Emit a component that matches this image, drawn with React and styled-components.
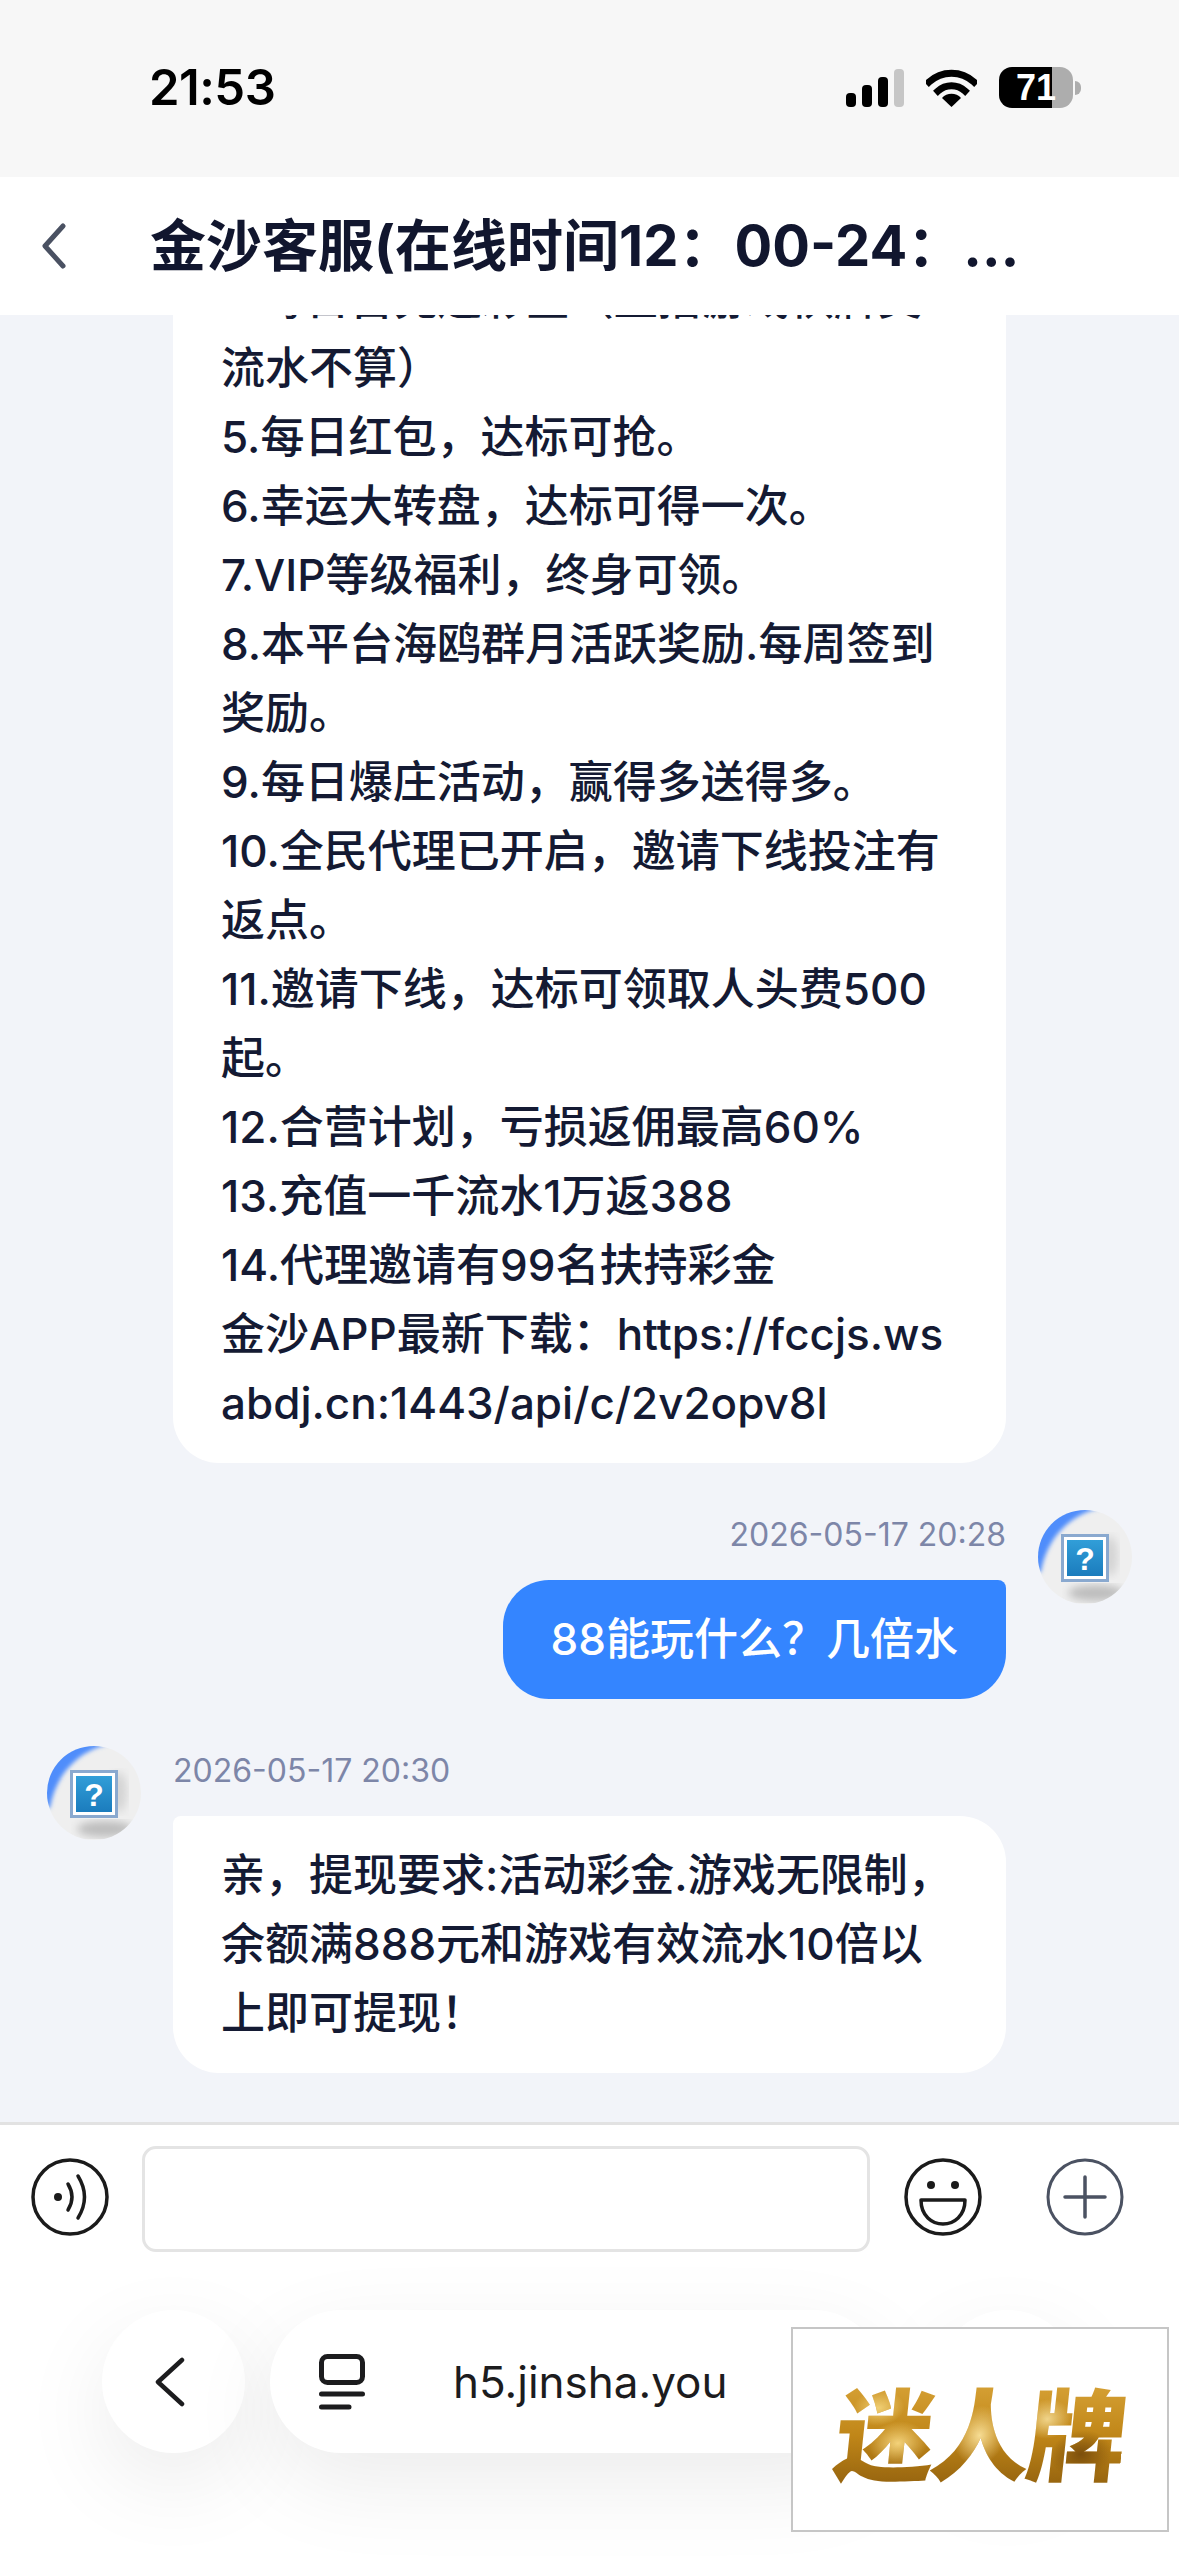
import React from 'react';
import styled, { createGlobalStyle } from 'styled-components';

const GlobalStyle = createGlobalStyle`
  html, body { margin: 0; padding: 0; background: #fff; }
  * { box-sizing: border-box; }
  body { font-family: Inter, "Noto Sans CJK SC", sans-serif; }
`;

const Page = styled.div`
  position: relative;
  width: 1179px;
  height: 2556px;
  display: flex;
  flex-direction: column;
  overflow: hidden;
  background: #fff;
`;

// status bar
const StatusBar = styled.div`
  height: 177px;
  flex: none;
  background: #f7f7f7;
  display: flex;
  justify-content: space-between;
  align-items: flex-start;
  padding: 67px 98px 0 149px;
`;
const Clock = styled.div`
  font: 600 49px/42px Inter, sans-serif;
  color: #000;
  letter-spacing: -0.5px;
`;
const StatusIcons = styled.div`
  display: flex;
  align-items: center;
  gap: 22px;
`;
const Battery = styled.div`
  width: 74px;
  height: 41px;
  border-radius: 13px;
  overflow: hidden;
  display: flex;
  align-items: center;
  justify-content: center;
  font: 700 36px/41px "Liberation Sans", sans-serif;
  color: #fff;
  background: linear-gradient(90deg, #000 0 53px, #adadad 53px);
`;
const BatteryWrap = styled.div`
  display: flex;
  align-items: center;
  gap: 2px;
`;
const BatteryTip = styled.div`
  width: 6px;
  height: 14px;
  background: #adadad;
  border-radius: 0 7px 7px 0;
`;

// header
const Header = styled.div`
  height: 138px;
  flex: none;
  background: #fff;
  display: flex;
  align-items: center;
  padding: 0 0 0 41px;
  position: relative;
  z-index: 2;
`;
const Title = styled.div`
  margin-left: 84px;
  width: 875px;
  font: 700 56px/76px Inter, "Noto Sans CJK SC", sans-serif;
  color: #11162e;
  white-space: nowrap;
  overflow: hidden;
  text-overflow: ellipsis;
`;

// chat list
const ChatList = styled.div`
  flex: 1;
  min-height: 0;
  overflow: hidden;
  background: #f2f4f9;
  display: flex;
  flex-direction: column;
  justify-content: flex-end;
  gap: 47px;
  padding: 0 47px 49px;
`;
const Row = styled.div`
  display: flex;
  flex: none;
  flex-direction: ${p => (p.$mine ? 'row-reverse' : 'row')};
  gap: 32px;
`;
const Body = styled.div`
  width: 833px;
  display: flex;
  flex-direction: column;
  align-items: ${p => (p.$mine ? 'flex-end' : 'flex-start')};
`;
const Time = styled.div`
  height: 50px;
  margin-bottom: 20px;
  font: 400 32px/50px Inter, sans-serif;
  color: #7d86a8;
`;
const Bubble = styled.div`
  padding: 25px 48px;
  width: ${p => (p.$mine ? 'auto' : '100%')};
  font: 500 44px/69px Inter, "Noto Sans CJK SC", sans-serif;
  white-space: nowrap;
  color: ${p => (p.$mine ? '#fff' : '#141a33')};
  background: ${p => (p.$mine ? '#3485ff' : '#fff')};
  border-radius: ${p => (p.$mine ? '46px 8px 46px 46px' : '8px 46px 46px 46px')};
`;
const Line = styled.div``;

// composer
const Composer = styled.div`
  flex: none;
  border-top: 3px solid #e2e2e2;
  background: #fff;
  height: 188px;
  display: flex;
  align-items: flex-start;
  padding: 21px 0 0 31px;
`;
const RoundIcon = styled.svg`
  flex: none;
  width: 78px;
  height: 78px;
  margin-top: 12px;
  margin-left: ${p => p.$gap || 0}px;
`;
const InputBox = styled.div`
  width: 728px;
  height: 106px;
  margin-left: 33px;
  background: #fff;
  border: 3px solid #e4e4e4;
  border-radius: 14px;
`;

// browser bar
const BrowserBar = styled.div`
  flex: none;
  height: 246px;
  display: flex;
  align-items: flex-start;
  padding: 0 0 0 102px;
  gap: 25px;
  background: #fff;
`;
const Pill = styled.div`
  height: 143px;
  width: ${p => p.$w}px;
  flex: none;
  display: flex;
  align-items: center;
  border-radius: 72px;
  background: #fff;
  box-shadow: 0 30px 90px rgba(0, 0, 0, 0.08);
  padding-left: ${p => p.$pad || 0}px;
  margin-left: ${p => p.$ml || 0}px;
`;
const Url = styled.div`
  margin-left: 88px;
  font: 400 44px/50px Inter, sans-serif;
  color: #1c1c1e;
`;

// watermark sitting over the browser bar
const Watermark = styled.div`
  position: absolute;
  left: 791px;
  top: 2327px;
  width: 378px;
  height: 205px;
  background: #fff;
  border: 2px solid #c6c6c6;
  display: flex;
  align-items: center;
  justify-content: center;
`;
const GoldText = styled.div`
  font: 900 100px/110px "Noto Sans CJK SC", sans-serif;
  letter-spacing: -4px;
  transform: skewX(-6deg);
  color: transparent;
  background:
    radial-gradient(ellipse 26px 18px at 14% 30%, #f0cf74 0, rgba(240, 207, 116, 0) 100%),
    radial-gradient(ellipse 30px 22px at 22% 62%, #f3d27a 0, rgba(243, 210, 122, 0) 100%),
    radial-gradient(ellipse 26px 30px at 50% 55%, #f6dc93 0, rgba(246, 220, 147, 0) 100%),
    radial-gradient(ellipse 24px 20px at 73% 40%, #f0d48a 0, rgba(240, 212, 138, 0) 100%),
    radial-gradient(ellipse 30px 24px at 86% 72%, #7c4f0c 0, rgba(124, 79, 12, 0) 100%),
    linear-gradient(180deg, #d9a53a 0%, #c08618 55%, #96640f 100%);
  -webkit-background-clip: text;
  background-clip: text;
`;

function Avatar() {
  return (
    <svg width="94" height="94" viewBox="0 0 94 94" style={{ flex: 'none' }}>
      <defs>
        <filter id="soft"><feGaussianBlur stdDeviation="4" /></filter>
        <filter id="softer"><feGaussianBlur stdDeviation="2" /></filter>
        <linearGradient id="qblue" x1="0" y1="0" x2="0" y2="1">
          <stop offset="0" stopColor="#319ed8" />
          <stop offset="1" stopColor="#1b7cbd" />
        </linearGradient>
        <clipPath id="round"><circle cx="47" cy="47" r="47" /></clipPath>
      </defs>
      <g clipPath="url(#round)">
        <rect width="94" height="94" fill="#efefef" />
        <path d="M-4 62 A50 50 0 0 1 62 -2 C38 3 10 22 3 62 Z" fill="#4f8dfb" filter="url(#softer)" />
        <ellipse cx="72" cy="46" rx="8" ry="20" fill="#d4d4d4" filter="url(#soft)" />
        <ellipse cx="58" cy="83" rx="28" ry="8" fill="#bdbdbd" filter="url(#soft)" />
      </g>
      <rect x="23" y="24" width="48" height="48" fill="#8aa9cf" />
      <rect x="26" y="27" width="42" height="42" fill="#fff" />
      <rect x="29" y="30" width="36" height="36" fill="url(#qblue)" />
      <text x="47" y="60" textAnchor="middle" fontFamily="'Liberation Sans', sans-serif" fontWeight="700" fontSize="32" fill="#fff">?</text>
    </svg>
  );
}

const longLines = [
  '4.每日首充送彩金（直播游戏棋牌类',
  '流水不算）',
  '5.每日红包，达标可抢。',
  '6.幸运大转盘，达标可得一次。',
  '7.VIP等级福利，终身可领。',
  '8.本平台海鸥群月活跃奖励.每周签到',
  '奖励。',
  '9.每日爆庄活动，赢得多送得多。',
  '10.全民代理已开启，邀请下线投注有',
  '返点。',
  '11.邀请下线，达标可领取人头费500',
  '起。',
  '12.合营计划，亏损返佣最高60%',
  '13.充值一千流水1万返388',
  '14.代理邀请有99名扶持彩金',
  '金沙APP最新下载：https://fccjs.ws',
  'abdj.cn:1443/api/c/2v2opv8l',
];

const replyLines = [
  '亲，提现要求:活动彩金.游戏无限制，',
  '余额满888元和游戏有效流水10倍以',
  '上即可提现！',
];

function Message({ mine, time, lines }) {
  return (
    <Row $mine={mine}>
      <Avatar />
      <Body $mine={mine}>
        <Time>{time}</Time>
        <Bubble $mine={mine}>
          {lines.map(l => <Line key={l}>{l}</Line>)}
        </Bubble>
      </Body>
    </Row>
  );
}

export default function App() {
  return (
    <Page>
      <GlobalStyle />
      <StatusBar>
        <Clock>21:53</Clock>
        <StatusIcons>
          <svg width="58" height="38" viewBox="0 0 58 38">
            <rect x="0" y="24" width="10" height="14" rx="4" fill="#000" />
            <rect x="16" y="16" width="10" height="22" rx="4" fill="#000" />
            <rect x="32" y="8" width="10" height="30" rx="4" fill="#000" />
            <rect x="48" y="0" width="10" height="38" rx="4" fill="#c6c6c6" />
          </svg>
          <svg width="51" height="38" viewBox="0 0 51 38">
            <path d="M3 13 A33 33 0 0 1 48 13" fill="none" stroke="#000" strokeWidth="7" strokeLinecap="square" />
            <path d="M12 22 A20 20 0 0 1 39 22" fill="none" stroke="#000" strokeWidth="7" strokeLinecap="square" />
            <path d="M25.5 38 L16 29 A13 13 0 0 1 35 29 Z" fill="#000" />
          </svg>
          <BatteryWrap>
            <Battery>71</Battery>
            <BatteryTip />
          </BatteryWrap>
        </StatusIcons>
      </StatusBar>

      <Header>
        <svg width="25" height="46" viewBox="0 0 25 46">
          <path d="M22 3 L4 23 L22 43" fill="none" stroke="#4a5162" strokeWidth="5" strokeLinecap="round" strokeLinejoin="round" />
        </svg>
        <Title>金沙客服(在线时间12：00-24：00)</Title>
      </Header>

      <ChatList>
        <Message time="" lines={longLines} />
        <Message mine time="2026-05-17 20:28" lines={['88能玩什么？几倍水']} />
        <Message time="2026-05-17 20:30" lines={replyLines} />
      </ChatList>

      <Composer>
        <RoundIcon viewBox="0 0 78 78">
          <circle cx="39" cy="39" r="37" fill="none" stroke="#1b1b1b" strokeWidth="3.5" />
          <circle cx="27" cy="39" r="4" fill="#1b1b1b" />
          <path d="M37 26 Q45 39 37 52" fill="none" stroke="#1b1b1b" strokeWidth="3.5" strokeLinecap="round" />
          <path d="M47 18 Q60 39 47 60" fill="none" stroke="#1b1b1b" strokeWidth="3.5" strokeLinecap="round" />
        </RoundIcon>
        <InputBox />
        <RoundIcon $gap={34} viewBox="0 0 78 78">
          <circle cx="39" cy="39" r="37" fill="none" stroke="#1b1b1b" strokeWidth="3.5" />
          <circle cx="27" cy="27" r="4" fill="#1b1b1b" />
          <circle cx="51" cy="27" r="4" fill="#1b1b1b" />
          <path d="M17 42 H61 C61 58 50 66 39 66 C28 66 17 58 17 42 Z" fill="none" stroke="#1b1b1b" strokeWidth="3.5" strokeLinejoin="round" />
        </RoundIcon>
        <RoundIcon $gap={64} viewBox="0 0 78 78">
          <circle cx="39" cy="39" r="37" fill="none" stroke="#4b5262" strokeWidth="3" />
          <path d="M39 19 V59 M19 39 H59" fill="none" stroke="#4b5262" strokeWidth="3.5" strokeLinecap="round" />
        </RoundIcon>
      </Composer>

      <BrowserBar>
        <Pill $w={143} $pad={52}>
          <svg width="31" height="50" viewBox="0 0 31 50">
            <path d="M28 3 L4 25 L28 47" fill="none" stroke="#1c1c1e" strokeWidth="4.5" strokeLinecap="round" strokeLinejoin="round" />
          </svg>
        </Pill>
        <Pill $w={615} $pad={49}>
          <svg width="46" height="56" viewBox="0 0 46 56" style={{ flex: 'none' }}>
            <rect x="2.5" y="2.5" width="41" height="26" rx="6" fill="none" stroke="#1c1c1e" strokeWidth="5" />
            <path d="M2.5 40 H43.5 M2.5 53 H30" fill="none" stroke="#1c1c1e" strokeWidth="5" strokeLinecap="round" />
          </svg>
          <Url>h5.jinsha.you</Url>
        </Pill>
        <Pill $w={143} $ml={26} />
      </BrowserBar>

      <Watermark>
        <GoldText>迷人牌</GoldText>
      </Watermark>
    </Page>
  );
}
